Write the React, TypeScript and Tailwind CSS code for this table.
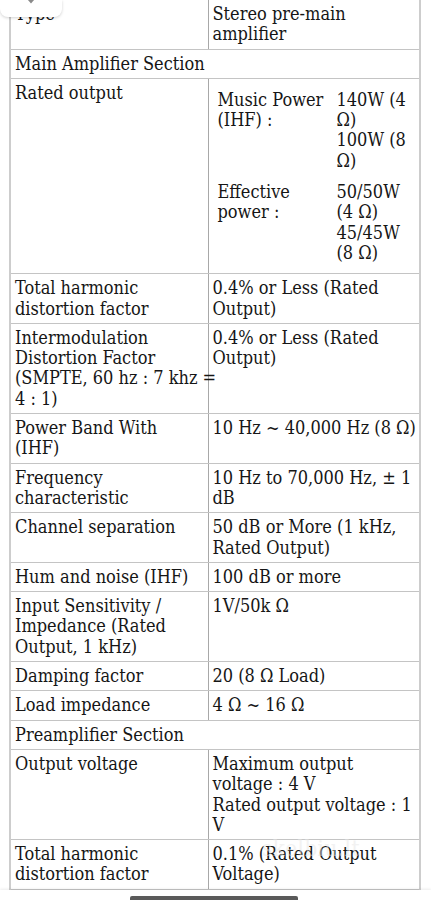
import React from "react";

type Row =
  | { kind: "section"; title: string }
  | { kind: "pair"; label: string[]; value: string[] }
  | { kind: "nested"; label: string[] };

const specs: Row[] = [
  { kind: "pair", label: ["Type"], value: ["Stereo pre-main", "amplifier"] },
  { kind: "section", title: "Main Amplifier Section" },
  { kind: "nested", label: ["Rated output"] },
  { kind: "pair", label: ["Total harmonic", "distortion factor"], value: ["0.4% or Less (Rated", "Output)"] },
  {
    kind: "pair",
    label: ["Intermodulation", "Distortion Factor", "(SMPTE, 60 hz : 7 khz =", "4 : 1)"],
    value: ["0.4% or Less (Rated", "Output)"],
  },
  { kind: "pair", label: ["Power Band With", "(IHF)"], value: ["10 Hz ~ 40,000 Hz (8 Ω)"] },
  { kind: "pair", label: ["Frequency", "characteristic"], value: ["10 Hz to 70,000 Hz, ± 1", "dB"] },
  { kind: "pair", label: ["Channel separation"], value: ["50 dB or More (1 kHz,", "Rated Output)"] },
  { kind: "pair", label: ["Hum and noise (IHF)"], value: ["100 dB or more"] },
  { kind: "pair", label: ["Input Sensitivity /", "Impedance (Rated", "Output, 1 kHz)"], value: ["1V/50k Ω"] },
  { kind: "pair", label: ["Damping factor"], value: ["20 (8 Ω Load)"] },
  { kind: "pair", label: ["Load impedance"], value: ["4 Ω ~ 16 Ω"] },
  { kind: "section", title: "Preamplifier Section" },
  {
    kind: "pair",
    label: ["Output voltage"],
    value: ["Maximum output", "voltage : 4 V", "Rated output voltage : 1", "V"],
  },
  { kind: "pair", label: ["Total harmonic", "distortion factor"], value: ["0.1% (Rated Output", "Voltage)"] },
  // next row is hidden behind the bottom bar
  { kind: "pair", label: ["\u00a0"], value: ["\u00a0"] },
];

const ratedOutput = [
  { label: ["Music Power", "(IHF) :"], value: ["140W (4", "Ω)", "100W (8", "Ω)"] },
  { label: ["Effective", "power :"], value: ["50/50W", "(4 Ω)", "45/45W", "(8 Ω)"] },
];

function Lines({ lines }: { lines: string[] }) {
  return (
    <>
      {lines.map((l, i) => (
        <div key={i} className="whitespace-nowrap">
          {l}
        </div>
      ))}
    </>
  );
}

const cellBase = "align-top px-[4px] py-[4px] border-b border-[#c4c4c4]";

export default function App() {
  return (
    <div
      className="relative h-[900px] w-[431px] overflow-hidden bg-white text-[#161616]"
      style={{ fontFamily: '"DejaVu Serif Condensed", "DejaVu Serif", serif' }}
    >
      <div className="pl-[9px]">
        <table className="w-[412px] table-fixed border-collapse text-[18px] leading-[20.3px] border-l-2 border-r-2 border-[#cdcdcd]">
          <colgroup>
            <col className="w-[198px]" />
            <col />
          </colgroup>
          <tbody>
            {specs.map((row, i) => {
              if (row.kind === "section") {
                return (
                  <tr key={i}>
                    <td colSpan={2} className={cellBase}>
                      <div className="whitespace-nowrap">{row.title}</div>
                    </td>
                  </tr>
                );
              }
              if (row.kind === "nested") {
                return (
                  <tr key={i}>
                    <td className={cellBase + " border-r border-r-[#a8a8a8]"}>
                      <Lines lines={row.label} />
                    </td>
                    <td className={cellBase}>
                      <table className="border-separate border-spacing-[2px]">
                        <tbody>
                          {ratedOutput.map((r, j) => (
                            <tr key={j}>
                              <td className="align-top w-[117px] px-[3px] pt-[5px] pb-[4px]">
                                <Lines lines={r.label} />
                              </td>
                              <td className="align-top px-[3px] pt-[5px] pb-[4px]">
                                <Lines lines={r.value} />
                              </td>
                            </tr>
                          ))}
                        </tbody>
                      </table>
                    </td>
                  </tr>
                );
              }
              return (
                <tr key={i}>
                  <td className={cellBase + " border-r border-r-[#a8a8a8]"}>
                    <Lines lines={row.label} />
                  </td>
                  <td className={cellBase}>
                    <Lines lines={row.value} />
                  </td>
                </tr>
              );
            })}
          </tbody>
        </table>
      </div>

      {/* faint watermark */}
      <div className="pointer-events-none absolute left-[262px] top-[832px] text-[22px] tracking-wide text-[#e6e6e6] opacity-50">
        skelbiu.lt
      </div>

      {/* collapsed header tab */}
      <div className="absolute left-0 top-0 h-[17px] w-[62px] rounded-b-[8px] bg-white shadow-[0_1px_3px_rgba(0,0,0,0.18)]">
        <svg className="absolute left-[23px] -top-[7px]" width="16" height="12" viewBox="0 0 16 12">
          <path d="M2 2 L8 9 L14 2" fill="none" stroke="#8a8a8a" strokeWidth="2" strokeLinecap="round" />
        </svg>
      </div>

      {/* bottom bar */}
      <div className="absolute bottom-0 left-0 right-0 h-[10px] bg-white shadow-[0_-1px_3px_rgba(0,0,0,0.08)]">
        <div className="absolute left-[130px] top-[6px] h-[4px] w-[168px] rounded-t-[2px] bg-[#5a5a5a]" />
      </div>
    </div>
  );
}
